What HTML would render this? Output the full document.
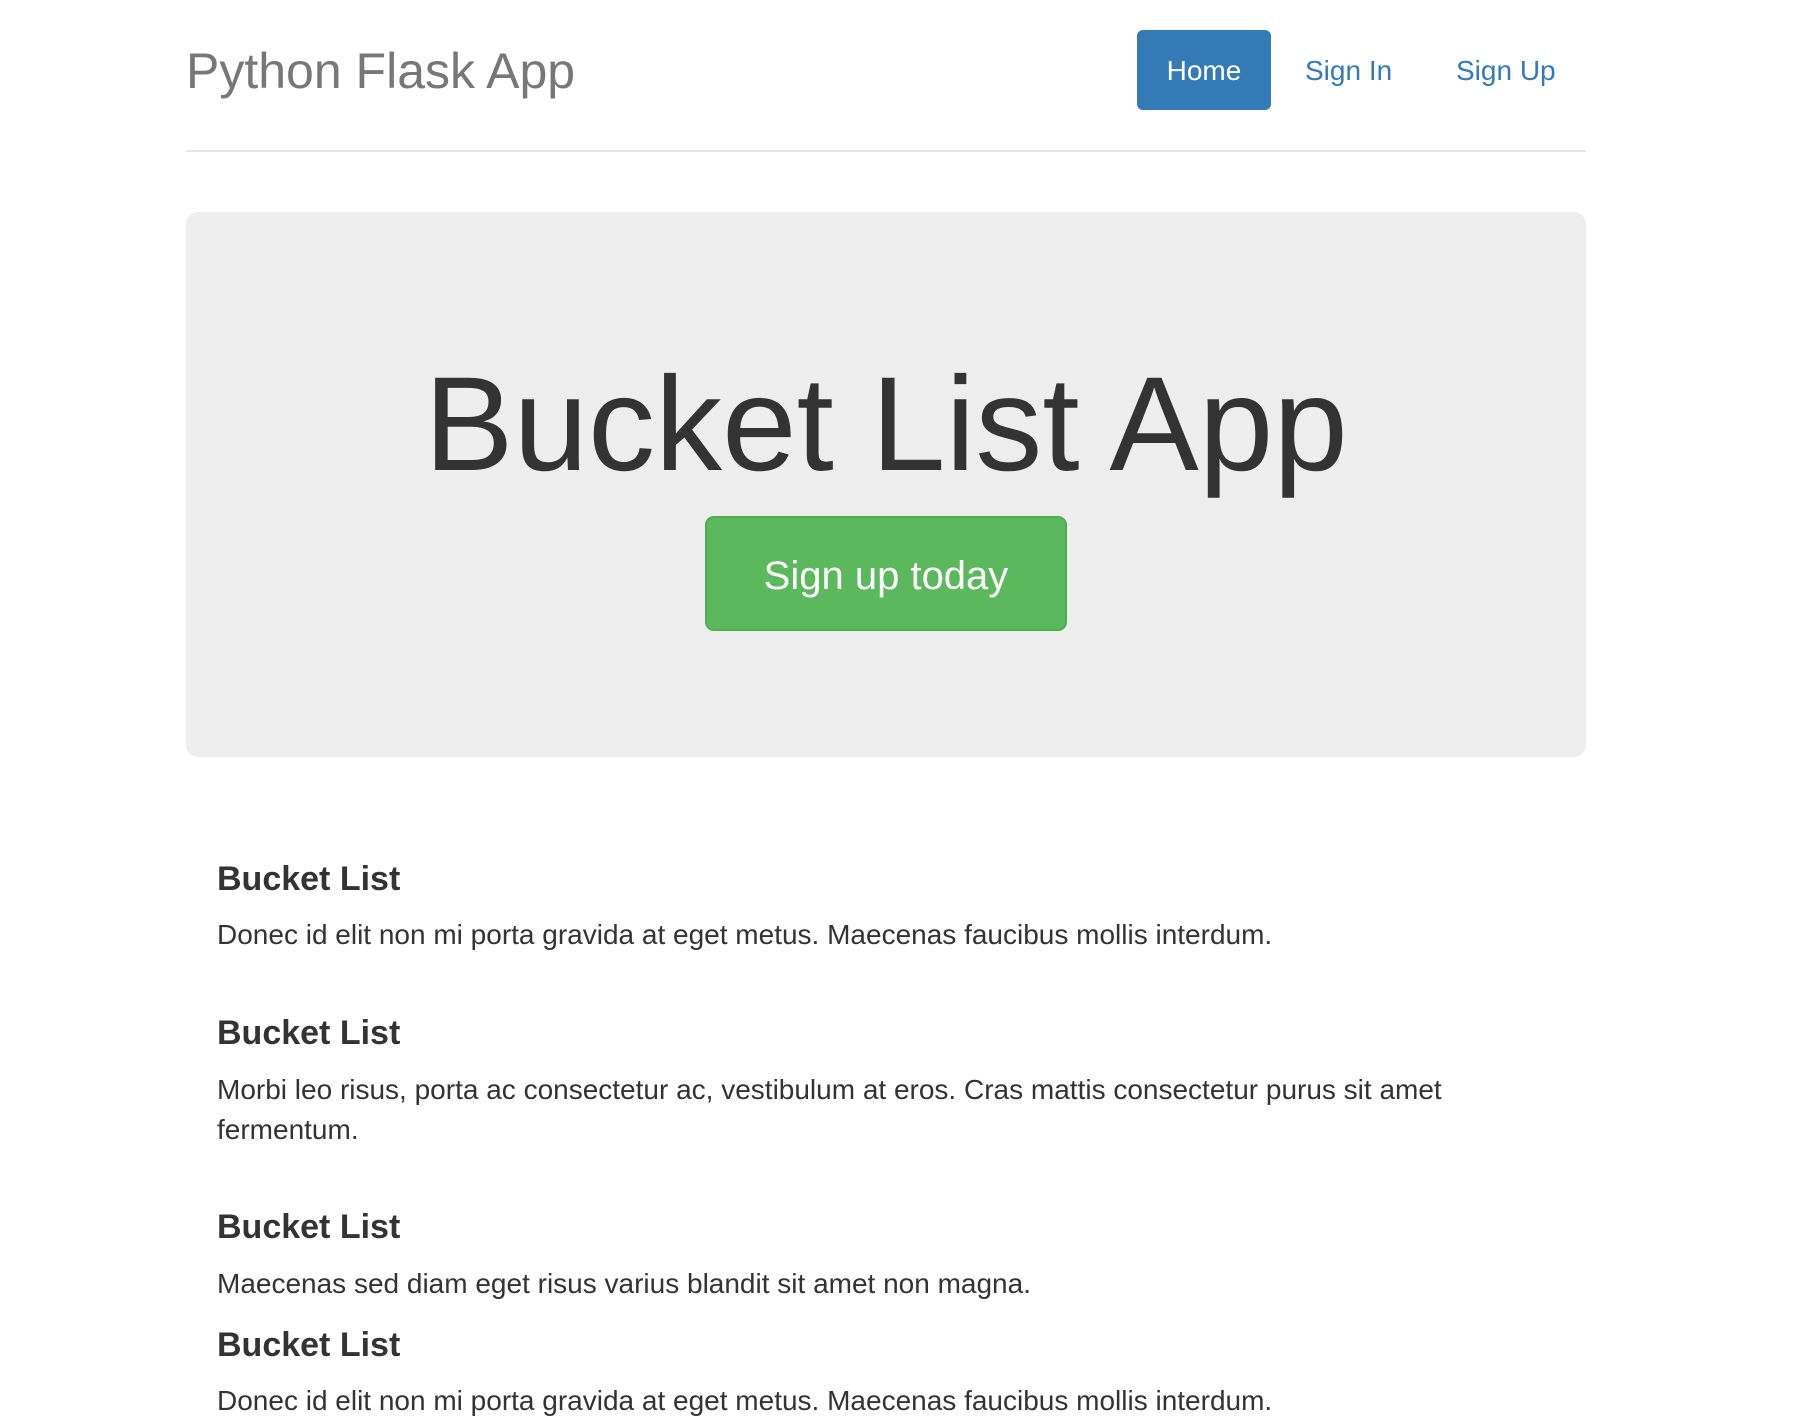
<!DOCTYPE html>
<html><head><meta charset="utf-8"><style>
*{margin:0;padding:0;box-sizing:border-box}
body{width:1798px;height:1416px;background:#fff;font-family:"Liberation Sans",Arial,sans-serif;position:relative;overflow:hidden}
.a{position:absolute;line-height:1;white-space:nowrap}
.h{font-size:34px;font-weight:bold;color:#333;left:217px}
.p{font-size:28px;color:#333;left:217px;line-height:40px}
</style></head><body>
<div class="a" style="left:186px;top:46px;font-size:50px;color:#777">Python Flask App</div>
<div class="a" style="left:1137px;top:30px;width:134px;height:80px;background:#337ab7;border-radius:6px"></div>
<div class="a" style="left:1137px;top:57px;width:134px;text-align:center;font-size:28px;color:#fff">Home</div>
<div class="a" style="left:1305px;top:57px;font-size:28px;color:#337ab7">Sign In</div>
<div class="a" style="left:1456px;top:57px;font-size:28px;color:#337ab7">Sign Up</div>
<div class="a" style="left:186px;top:150px;width:1400px;height:2px;background:#e5e5e5"></div>
<div class="a" style="left:186px;top:212px;width:1400px;height:545px;background:#eee;border-radius:12px"></div>
<div class="a" style="left:186px;top:358px;width:1400px;text-align:center;font-size:134px;color:#333">Bucket List App</div>
<div class="a" style="left:705px;top:516px;width:362px;height:115px;background:#5cb85c;border:2px solid #4cae4c;border-radius:9px"></div>
<div class="a" style="left:705px;top:556px;width:362px;text-align:center;font-size:40px;color:#fff">Sign up today</div>
<div class="a h" style="top:862px">Bucket List</div>
<div class="a p" style="top:915px">Donec id elit non mi porta gravida at eget metus. Maecenas faucibus mollis interdum.</div>
<div class="a h" style="top:1016px">Bucket List</div>
<div class="a p" style="top:1070px">Morbi leo risus, porta ac consectetur ac, vestibulum at eros. Cras mattis consectetur purus sit amet<br>fermentum.</div>
<div class="a h" style="top:1210px">Bucket List</div>
<div class="a p" style="top:1264px">Maecenas sed diam eget risus varius blandit sit amet non magna.</div>
<div class="a h" style="top:1328px">Bucket List</div>
<div class="a p" style="top:1381px">Donec id elit non mi porta gravida at eget metus. Maecenas faucibus mollis interdum.</div>
</body></html>
